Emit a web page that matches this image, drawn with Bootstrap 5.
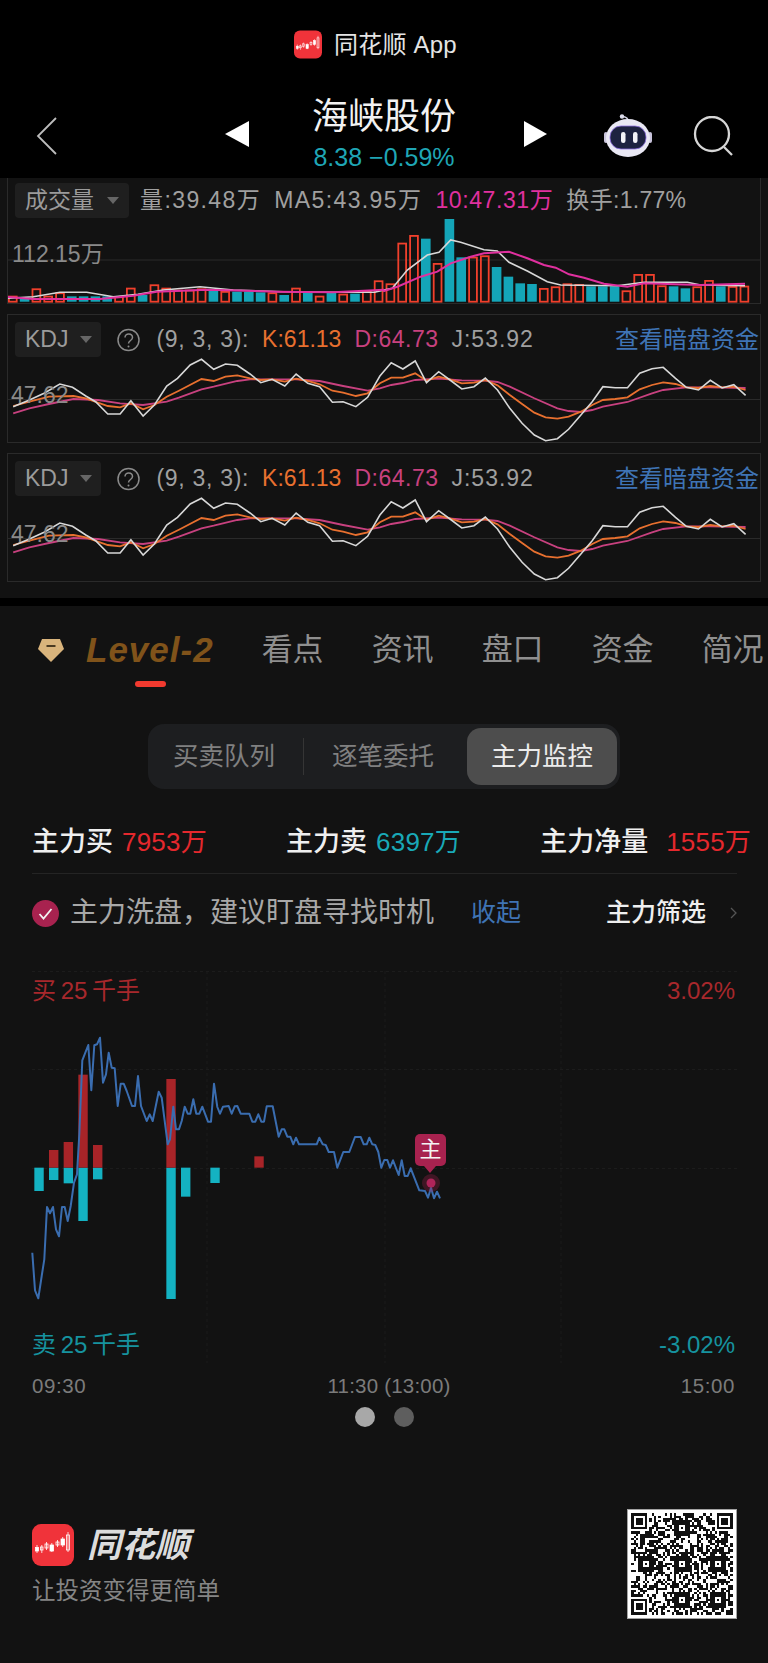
<!DOCTYPE html>
<html lang="zh-CN">
<head>
    <meta charset="UTF-8">
    <meta name="viewport" content="width=device-width, initial-scale=1.0">
    <title>海峡股份 | 同花顺</title>
    <link rel="stylesheet" href="https://cdn.jsdelivr.net/npm/bootstrap@5.3.0/dist/css/bootstrap.min.css">
    <style>
        html, body {
            background-color: #121212;
            font-family: "Liberation Sans", "Noto Sans CJK SC", sans-serif;
            height: 1663px;
            overflow: hidden;
        }
        .top-head { background-color: #000; height: 178px; }
        .app-bar { height: 60px; padding: 30px 17px 0 0; color: #e4e4e4; font-size: 24px; line-height: 29px; letter-spacing: .2px; }
        .app-bar svg { margin-right: 12px; }
        .stock-nav { height: 88px; margin-top: 30px; padding-left: 36px; }
        .stock-title { width: 270px; text-align: center; margin-top: 5px; }
        .stock-name { font-size: 36px; line-height: 44px; color: #f2f2f2; }
        .stock-price { font-size: 25px; line-height: 30px; margin-top: 3px; color: #1fa6b5; }
        .nudge { margin-top: 4px; }

        .chart-box { border: 1px solid #2a2a2a; margin: 0 7px; position: relative; font-size: 23px; color: #a0a0a0; }
        .chart-box svg.plot { display: block; width: 752px; height: 85px; }
        .vol-box { border-top: 0; height: 126px; padding-top: 5px; }
        .kdj-box { height: 129px; margin-top: 10px; }
        .chart-head { height: 35px; padding-left: 7px; line-height: 35px; white-space: nowrap; }
        .kdj-box .chart-head { margin-top: 7px; }
        .picker { background-color: #1f1f1f; border-radius: 4px; padding-left: 10px; height: 35px; color: #9b9b9b; }
        .picker i { display: block; width: 0; height: 0; border-left: 6px solid transparent; border-right: 6px solid transparent; border-top: 7px solid #666; margin: 0 9px 0 12px; }
        .picker.wide i { margin-left: 13px; margin-right: 10px; }
        .vol-item { margin-left: 13px; letter-spacing: 1.4px; }
        .axis-mark { position: absolute; color: #8a8a8a; line-height: 26px; }
        .c-k { color: #e8702f; }
        .c-d { color: #c8417f; letter-spacing: .5px; }
        .c-j { letter-spacing: 1px; }
        .c-ma { color: #e0309f; }
        .c-link { color: #3f74b5; }
        .kdj-link { font-size: 24px; margin-right: 1px; }
        .black-gap { background-color: #000; height: 8px; margin-top: 16px; }

        .tab-row { height: 88px; padding-left: 38px; flex-wrap: nowrap; white-space: nowrap; overflow: hidden; }
        .tab-row .nav-link { padding: 0; font-size: 31px; line-height: 40px; color: #8f8f8f; margin-left: 48px; }
        .tab-row .tab-level { color: #80531a; font-size: 35px; font-weight: 700; font-style: italic; margin-left: 22px; position: relative; letter-spacing: 1px; }
        .tab-level::after { content: ""; position: absolute; left: 49px; top: 51px; width: 31px; height: 6px; background-color: #f23a2f; border-radius: 3px; }

        .seg-wrap { margin-top: 30px; }
        .seg-box { background-color: #1d1e20; border-radius: 16px; height: 65px; padding: 4px 3px 4px 0; font-size: 25.5px; color: #808080; }
        .seg-opt { padding: 0 25px; white-space: nowrap; }
        .seg-line { width: 1px; height: 37px; background-color: #353535; margin: 0 3px; }
        .seg-on { background-color: #4d4d4d; color: #ececec; border-radius: 14px; width: 150px; height: 57px; margin-left: 8px; padding: 0 24px; }

        .stat-row { margin-top: 38px; padding: 0 17px 15px 32px; height: 46px; line-height: 30px; color: #efefef; font-size: 27px; font-weight: 500; }
        .stat-val { font-size: 26px; font-weight: 400; margin-left: 9px; letter-spacing: .2px; }
        .stat-val.far { margin-left: 18px; }
        .c-up { color: #e5282d; }
        .c-down { color: #19a9b7; }
        .rule-line { height: 1px; background-color: #242424; margin: 0 31px 0 32px; }
        .filter-row { height: 78px; padding: 0 31px 0 32px; font-size: 25px; color: #efefef; }
        .filter-tip { font-size: 28px; color: #a8a8a8; margin-left: 11px; white-space: nowrap; }
        .filter-fold { margin-left: 37px; }
        .filter-pick { font-weight: 500; }

        .flow-chart { height: 392px; margin-top: 19px; position: relative; }
        .flow-chart > svg { display: block; }
        .flow-labels { position: absolute; top: 6px; bottom: 4px; left: 32px; right: 33px; font-size: 24px; line-height: 28px; }
        .lab-up { color: #a8282c; }
        .lab-down { color: #16939f; }
        .lab-tight { word-spacing: -2px; }
        .flag-tip { position: absolute; left: 415px; top: 163px; width: 31px; height: 32px; background-color: #a8224f; border-radius: 5px; color: #f3f3f3; font-size: 22px; line-height: 32px; text-align: center; }
        .flag-tip::after { content: ""; position: absolute; left: 9px; top: 32px; border-left: 6px solid transparent; border-right: 6px solid transparent; border-top: 7px solid #a8224f; }
        .time-row { margin-top: 10px; padding: 0 33px 0 32px; line-height: 26px; font-size: 20.5px; color: #7b7b7b; letter-spacing: .6px; }
        .time-mid { margin-left: 11px; letter-spacing: .2px; }
        .pager { margin-top: 8px; gap: 19px; }
        .pager span { width: 20px; height: 20px; background-color: #a8a8a8; }
        .pager span + span { background-color: #5e5e5e; }

        .foot-row { margin-top: 82px; padding: 0 31px 0 32px; }
        .foot-brand { padding-top: 15px; }
        .foot-name { font-size: 34px; line-height: 42px; font-weight: 700; font-style: italic; color: #dcdcdc; margin-left: 13px; }
        .foot-slogan { font-size: 23.5px; line-height: 30px; color: #858585; margin-top: 10px; }
        .qr-frame { display: block; width: 110px; height: 110px; background-color: #fff; }
    </style>
</head>
<body>
    <svg width="0" height="0" class="position-absolute">
        <symbol id="thsLogo" viewBox="0 0 42 42">
            <rect width="42" height="42" rx="9" fill="#f0333a"/>
            <g fill="#fff" stroke="#fff" stroke-width=".8">
                <rect x="3.5" y="23.5" width="3" height="3.5"/><path d="M5 21v8"/>
                <rect x="8.5" y="23" width="2.5" height="3" fill="none"/><path d="M9.8 21v8"/>
                <rect x="13" y="20" width="3" height="4" fill="none"/><path d="M14.5 18v8"/>
                <rect x="18" y="21" width="3.5" height="6"/><path d="M19.8 19v9"/>
                <rect x="24" y="18" width="3" height="3" fill="none"/><path d="M25.5 16v7"/>
                <rect x="29" y="15" width="3.5" height="6"/><path d="M30.7 13v10"/>
                <rect x="34.5" y="11" width="3" height="15" fill="none"/><path d="M36 8v20"/>
            </g>
        </symbol>
    </svg>

    <!-- Header -->
    <header class="top-head">
        <div class="app-bar d-flex justify-content-center">
            <svg width="28" height="29"><use href="#thsLogo"/></svg>
            <span>同花顺 App</span>
        </div>
        <nav class="stock-nav d-flex align-items-center">
            <svg class="nudge" width="21" height="38" viewBox="0 0 21 38" fill="none" stroke="#bdbdbd" stroke-width="1.8"><path d="M20 1 2 19l18 18"/></svg>
            <svg width="24" height="26" viewBox="0 0 24 26" style="margin-left:168px"><path d="M24 0v26L0 13z" fill="#fff"/></svg>
            <div class="stock-title align-self-start">
                <div class="stock-name">海峡股份</div>
                <div class="stock-price">8.38 −0.59%</div>
            </div>
            <svg width="23" height="26" viewBox="0 0 23 26" style="margin-left:5px"><path d="M0 0v26L23 13z" fill="#fff"/></svg>
            <svg class="nudge" width="48" height="44" viewBox="0 0 48 44" style="margin-left:57px">
                <path d="M24 7c0-3-2-4-5-4.500" fill="none" stroke="#cfcfe0" stroke-width="1.500"/>
                <circle cx="18" cy="2.500" r="2.200" fill="#dcdcea"/>
                <rect x="0" y="18" width="4" height="11" rx="2" fill="#c9c4dc"/>
                <rect x="44" y="18" width="4" height="11" rx="2" fill="#c9c4dc"/>
                <ellipse cx="24" cy="24" rx="22" ry="19" fill="#e9e8f4"/>
                <rect x="6" y="12" width="36" height="23" rx="11" fill="#1e2340" stroke="#8d6fe0" stroke-width=".8"/>
                <rect x="17" y="18" width="4.500" height="11" rx="2.200" fill="#f4f4f8"/>
                <rect x="29" y="18" width="4.500" height="11" rx="2.200" fill="#f4f4f8"/>
            </svg>
            <svg class="nudge" width="41" height="40" viewBox="0 0 41 40" fill="none" stroke="#d6d6d6" stroke-width="2.300" style="margin-left:41px"><circle cx="19" cy="18" r="17"/><path d="m31 31 8 8"/></svg>
        </nav>
    </header>

    <!-- Volume -->
    <section class="chart-box vol-box">
        <div class="chart-head d-flex align-items-center">
            <div class="picker wide d-flex align-items-center">成交量<i></i></div>
            <span class="vol-item" style="margin-left:11px">量:39.48万</span>
            <span class="vol-item">MA5:43.95万</span>
            <span class="vol-item c-ma" style="letter-spacing:.6px">10:47.31万</span>
            <span class="vol-item" style="letter-spacing:.3px">换手:1.77%</span>
        </div>
        <svg class="plot" id="volPlot" viewBox="0 0 752 85"></svg>
        <span class="axis-mark" style="left:4px;top:63px">112.15万</span>
    </section>

    <!-- KDJ x2 -->
    <section class="chart-box kdj-box">
        <div class="chart-head d-flex align-items-center">
            <div class="picker d-flex align-items-center">KDJ<i></i></div>
            <svg class="ms-3" width="23" height="24" viewBox="0 0 23 24"><circle cx="11.500" cy="12" r="10.500" fill="none" stroke="#8a8a8a" stroke-width="1.500"/><path d="M8 9.500c0-5 7.500-4.500 7.500 0 0 3-4 3-4 6" fill="none" stroke="#8a8a8a" stroke-width="1.500"/><circle cx="11.500" cy="18.500" r="1" fill="#8a8a8a"/></svg>
            <span style="margin-left:16px;letter-spacing:.7px">(9, 3, 3):</span>
            <span class="c-k" style="margin-left:13px">K:61.13</span>
            <span class="c-d" style="margin-left:13px">D:64.73</span>
            <span class="c-j" style="margin-left:13px">J:53.92</span>
            <span class="c-link kdj-link ms-auto">查看暗盘资金</span>
        </div>
        <svg class="plot kdj-plot" viewBox="0 0 752 85"></svg>
        <span class="axis-mark" style="left:3px;top:67px">47.62</span>
    </section>
    <section class="chart-box kdj-box">
        <div class="chart-head d-flex align-items-center">
            <div class="picker d-flex align-items-center">KDJ<i></i></div>
            <svg class="ms-3" width="23" height="24" viewBox="0 0 23 24"><circle cx="11.500" cy="12" r="10.500" fill="none" stroke="#8a8a8a" stroke-width="1.500"/><path d="M8 9.500c0-5 7.500-4.500 7.500 0 0 3-4 3-4 6" fill="none" stroke="#8a8a8a" stroke-width="1.500"/><circle cx="11.500" cy="18.500" r="1" fill="#8a8a8a"/></svg>
            <span style="margin-left:16px;letter-spacing:.7px">(9, 3, 3):</span>
            <span class="c-k" style="margin-left:13px">K:61.13</span>
            <span class="c-d" style="margin-left:13px">D:64.73</span>
            <span class="c-j" style="margin-left:13px">J:53.92</span>
            <span class="c-link kdj-link ms-auto">查看暗盘资金</span>
        </div>
        <svg class="plot kdj-plot" viewBox="0 0 752 85"></svg>
        <span class="axis-mark" style="left:3px;top:67px">47.62</span>
    </section>
    <div class="black-gap"></div>

    <!-- Tabs -->
    <nav class="nav tab-row align-items-center">
        <svg width="26" height="23" viewBox="0 0 26 23"><path d="M4 0h18l4 10-13 13L0 10z" fill="#d9b47c"/><rect x="8.500" y="6" width="9" height="2" fill="#4a3a22"/></svg>
        <a class="nav-link tab-level" href="#">Level-2</a>
        <a class="nav-link" href="#">看点</a>
        <a class="nav-link" href="#">资讯</a>
        <a class="nav-link" href="#">盘口</a>
        <a class="nav-link" href="#">资金</a>
        <a class="nav-link" href="#">简况</a>
    </nav>

    <div class="seg-wrap d-flex justify-content-center">
        <div class="seg-box d-flex align-items-center">
            <span class="seg-opt">买卖队列</span>
            <span class="seg-line"></span>
            <span class="seg-opt">逐笔委托</span>
            <span class="seg-opt seg-on d-flex align-items-center">主力监控</span>
        </div>
    </div>

    <!-- Main force stats -->
    <div class="stat-row d-flex justify-content-between">
        <div>主力买<span class="stat-val c-up">7953万</span></div>
        <div>主力卖<span class="stat-val c-down">6397万</span></div>
        <div>主力净量<span class="stat-val far c-up">1555万</span></div>
    </div>
    <div class="rule-line"></div>
    <div class="filter-row d-flex align-items-center">
        <svg width="27" height="27" viewBox="0 0 27 27"><circle cx="13.500" cy="13.500" r="13.500" fill="#a8224f"/><path d="m7.500 14 4 4.500 8-9.500" fill="none" stroke="#f2f2f2" stroke-width="1.800"/></svg>
        <span class="filter-tip">主力洗盘，建议盯盘寻找时机</span>
        <span class="c-link filter-fold">收起</span>
        <span class="filter-pick ms-auto">主力筛选</span>
        <svg class="ms-4" width="7" height="12" viewBox="0 0 7 12" fill="none" stroke="#555" stroke-width="1.300"><path d="m1 1 5 5-5 5"/></svg>
    </div>

    <!-- Intraday flow chart -->
    <div class="flow-chart">
        <svg id="flowPlot" width="768" height="392" viewBox="0 0 768 392"></svg>
        <div class="flow-labels d-flex flex-column justify-content-between">
            <div class="d-flex justify-content-between lab-up"><span class="lab-tight">买 25 千手</span><span>3.02%</span></div>
            <div class="d-flex justify-content-between lab-down"><span class="lab-tight">卖 25 千手</span><span>-3.02%</span></div>
        </div>
        <div class="flag-tip">主</div>
    </div>
    <div class="time-row d-flex justify-content-between">
        <span>09:30</span>
        <span class="time-mid">11:30 (13:00)</span>
        <span>15:00</span>
    </div>
    <div class="pager d-flex justify-content-center">
        <span class="rounded-circle"></span>
        <span class="rounded-circle"></span>
    </div>

    <!-- Footer -->
    <footer class="foot-row d-flex justify-content-between align-items-start">
        <div class="foot-brand">
            <div class="d-flex align-items-center">
                <svg width="42" height="42"><use href="#thsLogo"/></svg>
                <span class="foot-name">同花顺</span>
            </div>
            <div class="foot-slogan">让投资变得更简单</div>
        </div>
        <svg class="qr-frame" id="qrCode" viewBox="0 0 49 49" shape-rendering="crispEdges"></svg>
    </footer>

    <script>
        const NS = "http://www.w3.org/2000/svg";

        function add(svg, tag, attrs) {
            const el = document.createElementNS(NS, tag);
            for (const k in attrs) el.setAttribute(k, attrs[k]);
            svg.appendChild(el);
            return el;
        }

        function pts(list, fx, fy) {
            return list.map(p => fx(p[0]).toFixed(1) + "," + fy(p[1]).toFixed(1)).join(" ");
        }

        // Volume bars: [top y in page px, hollow?]
        const volTops = [
            [362,1],[368,0],[340,1],[362,1],[352,1],[364,0],[364,0],[364,0],[364,0],[364,1],[338,1],[360,0],[328,1],[338,1],[344,1],[344,1],
            [340,1],[348,0],[348,1],[350,0],[350,0],[352,0],[352,1],[360,0],[338,1],[350,0],[362,1],[354,0],[356,1],[356,0],[346,1],[316,1],
            [325,1],[203,1],[180,1],[191,0],[264,1],[132,0],[247,0],[245,1],[241,1],[276,0],[305,0],[325,0],[327,0],[339,1],[334,1],[325,1],
            [327,1],[334,0],[334,0],[334,0],[346,1],[297,1],[297,1],[331,1],[334,0],[340,0],[334,1],[315,1],[334,0],[333,1],[332,1]
        ];
        const volPlot = document.getElementById("volPlot");
        const volY = y => y / 3 + 175 - 218;
        add(volPlot, "line", { x1: 0, x2: 752, y1: 42, y2: 42, stroke: "#2a2a2a", "stroke-width": 1 });
        volTops.forEach((b, i) => {
            const x = i * 11.8, top = volY(b[0]), h = 83.7 - top;
            if (b[1]) add(volPlot, "rect", { x: x + .9, y: top + .9, width: 7.8, height: h - .9, fill: "none", stroke: "#f0402c", "stroke-width": 1.8 });
            else add(volPlot, "rect", { x: x, y: top, width: 9.6, height: h, fill: "#14a5b8" });
        });
        const page7 = p => p / 3 - 8, page8 = p => p / 3 + 376;
        const ma5 = pts([[24,370],[100,365],[180,352],[260,352],[340,365],[414,358],[490,345],[600,335],[700,345],[850,350],[1000,352],[1124,352]], page7, volY)
            + " " + pts([[0,345],[25,340],[70,285],[130,240],[165,232],[200,195],[230,202],[300,224],[340,228],[375,262],[430,288],[490,320],[530,330],[700,332],[780,322],[910,322],[950,330],[1083,332]], page8, volY);
        const ma10 = pts([[24,366],[100,372],[300,372],[400,362],[470,350],[620,344],[830,350],[1000,352],[1150,344]], page7, volY)
            + " " + pts([[0,348],[40,335],[110,305],[160,290],[200,265],[260,245],[300,235],[375,230],[430,250],[480,270],[515,278],[555,298],[600,308],[660,326],[730,335],[780,325],[850,327],[950,330],[1083,326]], page8, volY);
        add(volPlot, "polyline", { points: ma5, fill: "none", stroke: "#d8d8d8", "stroke-width": 1.6 });
        add(volPlot, "polyline", { points: ma10, fill: "none", stroke: "#e0309f", "stroke-width": 2 });

        // KDJ lines
        const kdjJ = [[27,320],[60,300],[90,280],[122,252],[148,262],[175,288],[195,305],[220,342],[245,342],[267,302],[292,348],[315,315],[340,258],[362,235],[388,195],[411,178],[436,208],[460,192],[484,196],[510,222],[532,248],[555,238],[581,258],[604,222],[628,250],[652,260],[678,307],[700,305],[726,320],[750,292],[775,228],[798,188],[822,207],[847,183],[870,248],[895,215],[918,240],[942,267],[967,260],[990,234],[1015,270],[1040,325],[1065,370],[1090,405],[1113,422],[1137,416],[1160,388],[1185,345],[1208,305],[1230,260],[1255,263],[1280,263],[1305,220],[1330,206],[1353,202],[1378,235],[1400,262],[1425,270],[1449,241],[1473,264],[1497,254],[1521,286]];
        const kdjK = [[27,318],[60,305],[100,290],[150,288],[175,295],[220,318],[245,322],[267,310],[292,328],[315,315],[340,290],[365,272],[411,237],[436,243],[460,230],[484,226],[510,235],[532,240],[555,238],[581,245],[604,236],[628,243],[652,253],[678,272],[700,278],[726,288],[750,280],[775,250],[798,233],[822,233],[847,220],[870,242],[895,230],[918,238],[942,250],[967,248],[990,240],[1015,256],[1040,285],[1065,312],[1090,338],[1113,352],[1137,356],[1160,350],[1185,335],[1208,315],[1230,300],[1255,297],[1280,292],[1305,268],[1330,255],[1353,247],[1378,252],[1400,262],[1425,264],[1449,258],[1473,262],[1497,260],[1521,270]];
        const kdjD = [[27,340],[60,325],[100,312],[150,297],[200,300],[245,310],[292,315],[340,305],[365,293],[411,268],[436,260],[484,243],[510,238],[604,238],[652,243],[700,258],[750,272],[775,265],[798,255],[822,249],[847,240],[895,236],[942,241],[990,242],[1015,246],[1040,260],[1090,295],[1137,325],[1160,333],[1185,336],[1208,330],[1230,320],[1280,306],[1330,280],[1353,270],[1400,262],[1449,262],[1521,264]];
        document.querySelectorAll(".kdj-plot").forEach(svg => {
            const fx = x => x / 2.04 - 8, fy = y => y / 3 - 57;
            add(svg, "line", { x1: 0, x2: 752, y1: 42.5, y2: 42.5, stroke: "#2a2a2a", "stroke-width": 1 });
            add(svg, "polyline", { points: pts(kdjD, fx, fy), fill: "none", stroke: "#c8417f", "stroke-width": 1.8 });
            add(svg, "polyline", { points: pts(kdjK, fx, fy), fill: "none", stroke: "#e8702f", "stroke-width": 1.8 });
            add(svg, "polyline", { points: pts(kdjJ, fx, fy), fill: "none", stroke: "#d8d8d8", "stroke-width": 1.6 });
        });

        // Main force flow chart
        const flow = document.getElementById("flowPlot");
        [0, 98, 197, 392].forEach(y => add(flow, "line", { x1: 32, x2: 737, y1: y + .5, y2: y + .5, stroke: "#1c1c1c", "stroke-dasharray": "3 3" }));
        [207, 385, 561].forEach(x => add(flow, "line", { x1: x, x2: x, y1: 0, y2: 392, stroke: "#1a1a1a", "stroke-dasharray": "3 3" }));
        const barY = y => y / 3 - 10;
        const barBase = 620;
        [[103,690],[147,657],[191,667],[235,780],[279,655],[499,1014],[543,707],[631,666]].forEach(b =>
            add(flow, "rect", { x: b[0] / 3, y: barY(barBase), width: 9.4, height: (b[1] - barBase) / 3, fill: "#14b2c2" }));
        [[147,567],[191,543],[235,341],[279,552],[499,354],[763,586]].forEach(b =>
            add(flow, "rect", { x: b[0] / 3, y: barY(b[1]), width: 9.4, height: (barBase - b[1]) / 3, fill: "#a82428" }));
        const flowLine = [[97,875],[105,988],[115,1012],[125,945],[133,895],[141,738],[150,757],[159,738],[168,805],[177,826],[186,738],[194,738],[203,780],[212,735],[222,665],[231,640],[238,520],[247,298],[265,252],[274,388],[283,253],[291,250],[300,230],[309,365],[318,340],[326,275],[335,320],[344,322],[353,435],[362,368],[371,368],[380,390],[396,435],[405,435],[414,345],[423,435],[440,480],[449,460],[458,480],[476,392],[485,410],[503,550],[510,535],[520,437],[528,505],[537,505],[545,480],[554,437],[563,458],[571,458],[580,415],[589,458],[598,458],[607,437],[624,482],[633,482],[642,368],[652,438],[660,458],[669,437],[686,435],[695,458],[704,436],[712,435],[722,458],[748,458],[757,482],[766,482],[775,460],[784,482],[792,482],[800,436],[818,436],[836,527],[845,505],[853,505],[862,527],[871,527],[880,550],[888,530],[897,550],[950,550],[958,530],[968,550],[977,552],[986,573],[1002,573],[1012,620],[1030,573],[1048,573],[1065,528],[1082,528],[1091,550],[1100,550],[1108,530],[1117,550],[1126,552],[1135,573],[1144,620],[1153,597],[1162,597],[1170,620],[1179,598],[1196,642],[1205,598],[1214,645],[1223,645],[1232,622],[1258,688],[1275,690],[1284,710],[1293,680],[1302,712],[1311,692],[1320,712]];
        add(flow, "polyline", { points: pts(flowLine, x => x / 3, barY), fill: "none", stroke: "#3a6db0", "stroke-width": 2, "stroke-linejoin": "round" });
        add(flow, "circle", { cx: 431, cy: 212, r: 9, fill: "#a8224f", "fill-opacity": .3 });
        add(flow, "circle", { cx: 431, cy: 212, r: 4.5, fill: "#b0245a" });

        // QR code, version 7 layout with filler modules
        const qr = document.getElementById("qrCode");
        const size = 45, cells = [];
        let seed = 20240;
        for (let r = 0; r < size; r++) {
            cells.push([]);
            for (let c = 0; c < size; c++) {
                seed = (seed * 1103515245 + 12345) & 0x7fffffff;
                cells[r].push((seed >> 16) & 1);
            }
        }
        function stamp(r0, c0, n) {
            for (let r = -1; r <= n; r++) for (let c = -1; c <= n; c++) {
                const rr = r0 + r, cc = c0 + c;
                if (rr < 0 || cc < 0 || rr >= size || cc >= size) continue;
                const edge = Math.min(r, c, n - 1 - r, n - 1 - c);
                cells[rr][cc] = n === 7 ? (edge === -1 || edge === 1 ? 0 : 1) : (edge === 1 ? 0 : 1);
            }
        }
        stamp(0, 0, 7); stamp(0, 38, 7); stamp(38, 0, 7);
        [[4,20],[20,4],[20,20],[20,36],[36,20],[36,36]].forEach(a => stamp(a[0], a[1], 5));
        cells.forEach((row, r) => row.forEach((on, c) => {
            if (on) add(qr, "rect", { x: c + 2, y: r + 2, width: 1, height: 1, fill: "#111" });
        }));
        add(qr, "rect", { x: .2, y: .2, width: 48.6, height: 48.6, fill: "none", stroke: "#999", "stroke-width": .4 });
    </script>
    <script src="https://cdn.jsdelivr.net/npm/bootstrap@5.3.0/dist/js/bootstrap.bundle.min.js"></script>
</body>
</html>
